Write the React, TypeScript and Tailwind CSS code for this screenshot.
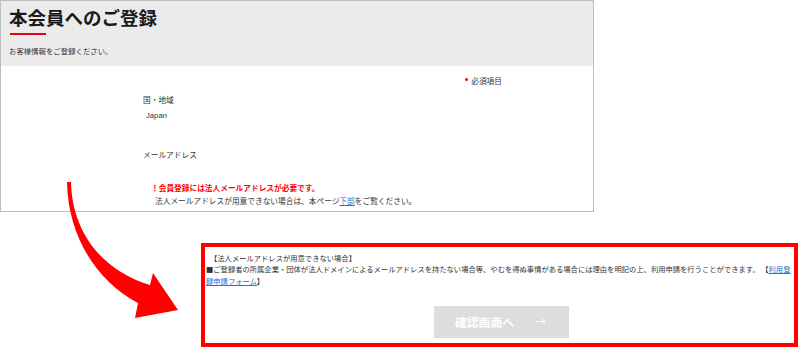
const jp = { fontFamily: '"Noto Sans CJK JP", "Noto Sans", sans-serif' };

function CurvedArrow() {
  return (
    <svg
      className="pointer-events-none absolute left-0 top-0"
      width="800"
      height="348"
      viewBox="0 0 800 348"
    >
      <path
        d="M67,182 L71,182 C72,230 100,270 150,285 L153,273 L178,310 L135,318 L138,303 C95,280 68,235 67,182 Z"
        fill="#ff0000"
      />
    </svg>
  );
}

function RegisterPanel() {
  return (
    <div className="h-[212px] w-[594px] border border-[#bdbdbd] bg-white">
      <div className="h-[65px] bg-[#ebebeb] pl-[8px]">
        <h1 className="pt-[4px] text-[18.5px] font-bold leading-[24px] text-[#1a1a1a]">
          本会員へのご登録
        </h1>
        <div className="ml-[1px] mt-[4px] h-[2px] w-[36px] bg-[#e60012]" />
        <p className="mt-[10px] text-[7.4px] leading-[12px] text-[#333]">
          お客様情報をご登録ください。
        </p>
      </div>

      <div className="text-[7.7px] leading-[12px] text-[#333]">
        <div className="flex items-center justify-end pr-[91px] pt-[9px]">
          <span className="mb-[3px] mr-[3px] h-[3px] w-[3px] rounded-full bg-[#ff0000]" />
          <span>必須項目</span>
        </div>
        <div className="pl-[142px]">
          <p className="mt-[7px]">国・地域</p>
          <p className="mt-[4px] pl-[3px]" style={{ fontFamily: '"Liberation Sans", sans-serif' }}>
            Japan
          </p>
          <p className="mt-[27px]">メールアドレス</p>
          <p className="mt-[21px] pl-[8px] font-bold text-[#ff0000]">
            ！会員登録には法人メールアドレスが必要です。
          </p>
          <p className="mt-[1px] pl-[12px]">
            法人メールアドレスが用意できない場合は、本ページ
            <span className="text-[#2a6fd6] underline">下部</span>
            をご覧ください。
          </p>
        </div>
      </div>
    </div>
  );
}

function NoticeBox() {
  return (
    <div className="ml-[201px] mt-[31px] h-[104px] w-[597px] border-[4px] border-[#ff0000] bg-white">
      <div className="pl-[1px] pt-[6px] text-[7.3px] leading-[11.3px] text-[#333]">
        <p className="whitespace-nowrap pl-[4px]">【法人メールアドレスが用意できない場合】</p>
        <p className="whitespace-nowrap">
          ■ご登録者の所属企業・団体が法人ドメインによるメールアドレスを持たない場合等、やむを得ぬ事情がある場合には理由を明記の上、利用申請を行うことができます。
          【<span className="text-[#2a6fd6] underline">利用登</span>
          <br />
          <span className="text-[#2a6fd6] underline">録申請フォーム</span>】
        </p>
      </div>
      <div className="ml-[229px] mt-[19px] flex h-[32px] w-[135px] items-center bg-[#dddddd] pl-[21px] text-white">
        <span className="text-[11.8px] font-bold leading-none">確認画面へ</span>
        <span className="ml-[21px] text-[11px] leading-none">→</span>
      </div>
    </div>
  );
}

export default function App() {
  return (
    <div className="relative h-[348px] w-[800px] overflow-hidden bg-white" style={jp}>
      <RegisterPanel />
      <NoticeBox />
      <CurvedArrow />
    </div>
  );
}
